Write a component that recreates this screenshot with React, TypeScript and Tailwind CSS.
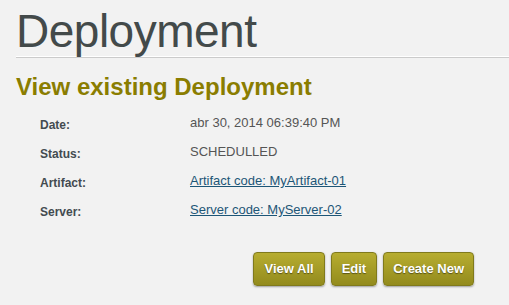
import React from 'react';

const rows: { label: string; value: string; link?: boolean }[] = [
  { label: 'Date:', value: 'abr 30, 2014 06:39:40 PM' },
  { label: 'Status:', value: 'SCHEDULLED' },
  { label: 'Artifact:', value: 'Artifact code: MyArtifact-01', link: true },
  { label: 'Server:', value: 'Server code: MyServer-02', link: true },
];

const Button = ({ children, wide }: { children: React.ReactNode; wide?: boolean }) => (
  <button
    className={
      'rounded-[4px] border border-[#807a1c] bg-gradient-to-b from-[#b7ad30] to-[#938b1d] py-[8px] text-[13px] font-bold leading-[16px] text-white shadow-[0_1px_2px_rgba(0,0,0,0.35)] [text-shadow:0_1px_1px_rgba(0,0,0,0.45)] ' +
      (wide ? 'px-[9px]' : 'px-[10px]')
    }
  >
    {children}
  </button>
);

export default function App() {
  return (
    <div className="min-h-[305px] w-full bg-[#f2f2f2] font-['Liberation_Sans',Arial,sans-serif]">
      <div className="pl-[16px]">
        <h1 className="border-b border-[#cbcbcb] pt-[5px] text-[46px] leading-[52px] tracking-[-0.5px] text-[#434a4a] shadow-[0_-1px_0_#ffffff_inset]">
          Deployment
        </h1>
        <h2 className="mt-[15px] text-[24px] font-bold leading-[28px] text-[#8a7d00]">
          View existing Deployment
        </h2>
        <div className="mt-[14px] pl-[24px]">
          {rows.map((r) => (
            <div key={r.label} className="flex h-[29px] items-start">
              <div className="w-[150px] pt-[2px] text-[12px] font-bold leading-[16px] text-[#434b50]">
                {r.label}
              </div>
              <div className="text-[13px] leading-[16px] text-[#555555]">
                {r.link ? (
                  <a href="#" className="text-[#1d5677] underline">
                    {r.value}
                  </a>
                ) : (
                  r.value
                )}
              </div>
            </div>
          ))}
        </div>
        <div className="mt-[21px] flex justify-end gap-[6px] pr-[35px]">
          <Button>View All</Button>
          <Button>Edit</Button>
          <Button wide>Create New</Button>
        </div>
      </div>
    </div>
  );
}
